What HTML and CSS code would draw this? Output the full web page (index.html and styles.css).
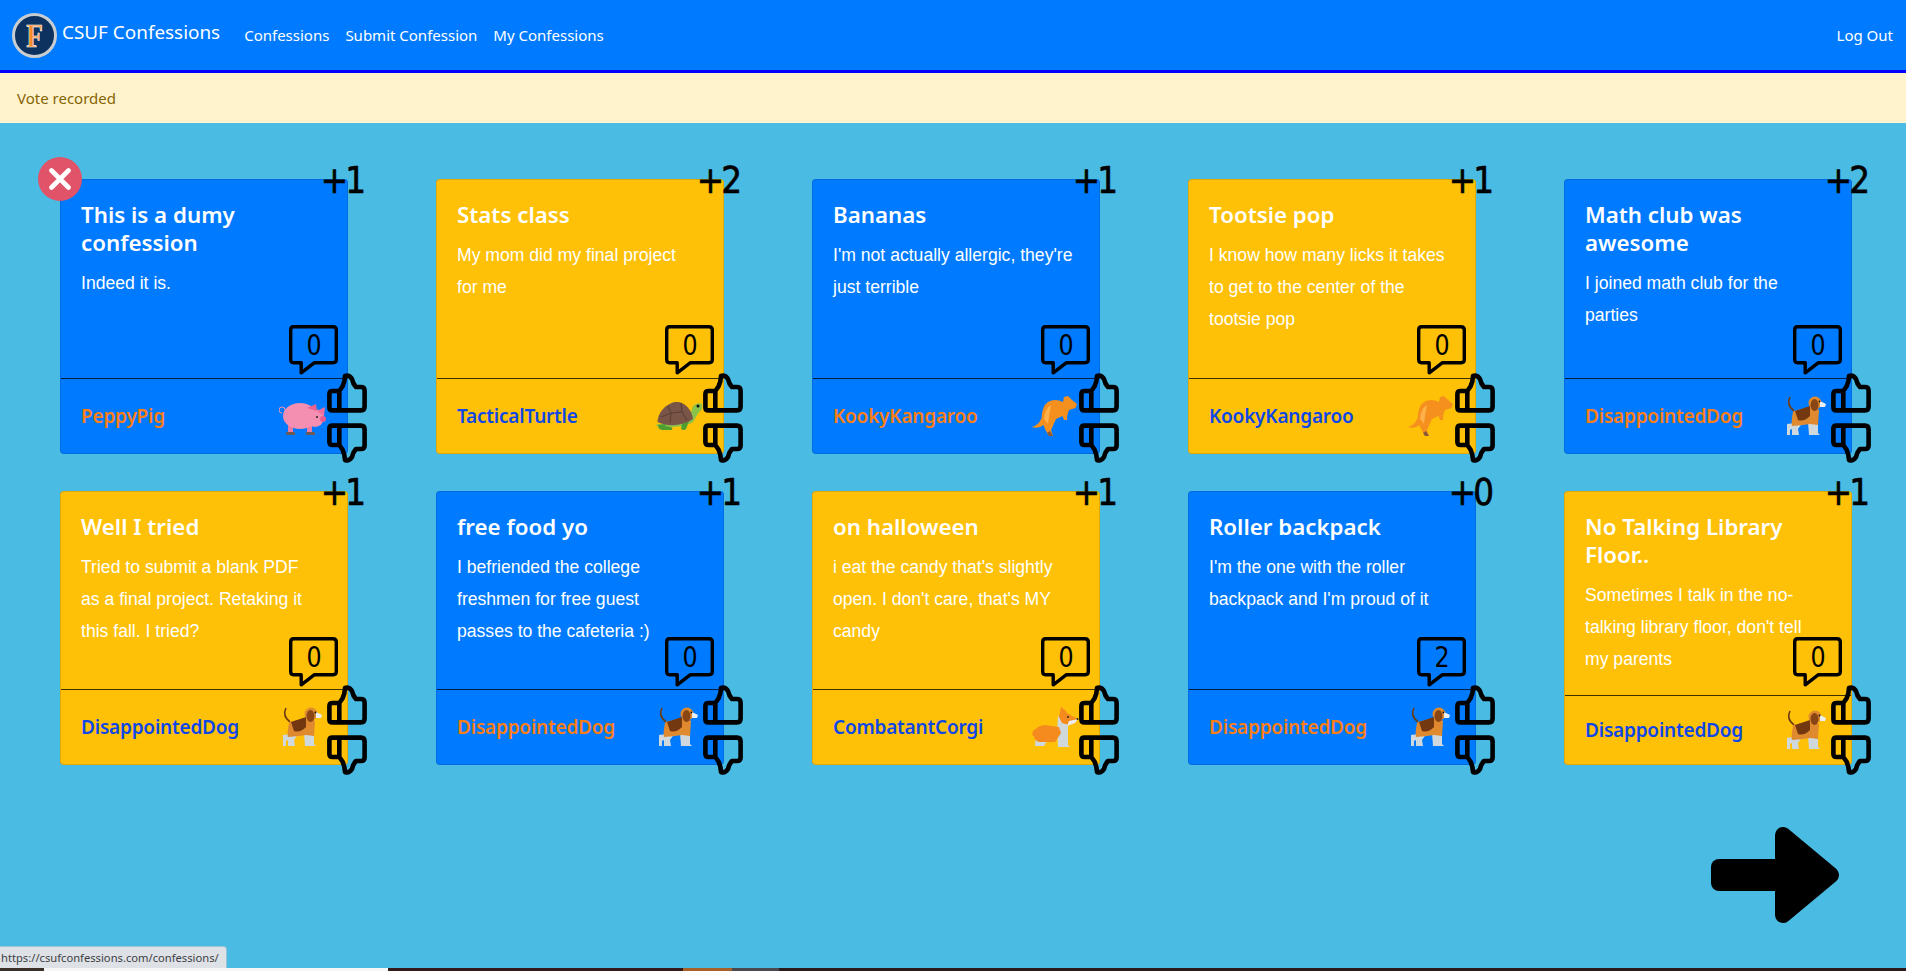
FILE: index.html
```html
<!DOCTYPE html>
<html lang="en">
<head>
<meta charset="utf-8">
<title>CSUF Confessions</title>
<link rel="stylesheet" href="styles.css">
</head>
<body>
<svg class="sprite" aria-hidden="true">
  <symbol id="i-up" viewBox="0 0 40 40"><path d="M12.3 18L15.5 13.5Q18 8 18 3Q22 1.5 25 6Q26 11 29 14H34Q37.6 14 37.6 17.5V33.5Q37.6 37.4 34 37.4H5.5Q2.4 37.4 2.4 34.4V21Q2.4 18 5.5 18H12.3V37.4"/></symbol>
  <symbol id="i-down" viewBox="0 0 40 40"><path d="M12.3 22L15.5 26.5Q18 32 18 37Q22 38.5 25 34Q26 29 29 26H34Q37.6 26 37.6 22.5V6.5Q37.6 2.6 34 2.6H5.5Q2.4 2.6 2.4 5.6V19Q2.4 22 5.5 22H12.3V2.6"/></symbol>
  <symbol id="i-bubble" viewBox="0 0 50 50"><path d="M4.5 1.8H44Q47.3 1.8 47.3 5V34.5Q47.3 37.7 44 37.7H25.5L12.2 47.8V37.7H4.5Q1.7 37.7 1.7 34.5V5Q1.7 1.8 4.5 1.8Z"/></symbol>
  <symbol id="a-pig" viewBox="0 0 48 48">
    <path d="M6 18a3 3 0 1 0-3 3" fill="none" stroke="#f48fb1" stroke-width="1"/>
    <rect x="9" y="32" width="5" height="9" fill="#ec7ca3"/><rect x="28" y="32" width="5" height="9" fill="#ec7ca3"/>
    <rect x="7" y="40" width="9" height="3" rx="1" fill="#6d5a55"/><rect x="27" y="40" width="9" height="3" rx="1" fill="#6d5a55"/>
    <ellipse cx="21" cy="24" rx="17" ry="13" fill="#f48fb1"/>
    <ellipse cx="36" cy="26" rx="9" ry="9" fill="#f48fb1"/>
    <path d="M28 16l9-4 1 7z" fill="#e8628f"/><path d="M38 19l8-4-1 9z" fill="#f06f9c"/>
    <ellipse cx="44" cy="27" rx="3" ry="3" fill="#ec5c90"/><circle cx="38" cy="25" r="1" fill="#222"/>
  </symbol>
  <symbol id="a-turtle" viewBox="0 0 48 48">
    <path d="M0 33C12 30 28 30 34 26L38 14Q42 10 47 12 48 18 44 20L38 30Q30 36 6 35Z" fill="#8bc34a"/>
    <path d="M3 33q0 5 5 5h9q1-3-2-3l-5-1 1-2zM27 31l-1 6q3 2 5 0l3-8z" fill="#4f9e2f"/>
    <path d="M2.500 30C3 18 14 10 22 10 30 10 37 18 38 27 28 34 12 35 2.500 30Z" fill="#795548"/>
    <path d="M13 14l3 7-10 4M16 21l11-1 5 8M27 20l-1-9M16 21l-1 10" stroke="#5d4037" stroke-width="1.200" fill="none"/>
    <circle cx="43" cy="14" r="1.500" fill="#111"/>
  </symbol>
  <symbol id="a-kangaroo" viewBox="0 0 48 48">
    <path d="M.7 35Q7 34 10.700 26 11 14 17 10 24 6 32 10L33 5 37 4 41 8 46 12 44.500 16 38 18Q36 22 36 28L33 28 31.500 24 25 27 20 38 22 44 18 44 14 37 12.500 33Q8 37 .7 35Z" fill="#f5901e"/>
    <path d="M13 27Q14 16 20 13 18 22 17 32Z" fill="#ffb04a"/><path d="M19 39L22 44 18 44 16 41Z" fill="#8a5a3a"/>
  </symbol>
  <symbol id="a-dog" viewBox="0 0 48 48">
    <path d="M7 5Q3 13 11 19" fill="none" stroke="#6d3a12" stroke-width="1.600"/>
    <path d="M4 32L20 30 15 37 16 43H9V37L7 38V43H4ZM25 30H35V41L37 43H26Z" fill="#cfd8dc"/>
    <path d="M10 20Q8 30 9 34L20 33 27 32 35 33 36 18 30 14 11 19Z" fill="#e08a30"/>
    <path d="M12 19L27 14V24Q21 30 15 28Z" fill="#73380f"/>
    <circle cx="32" cy="11" r="6.500" fill="#e08a30"/>
    <ellipse cx="31.500" cy="13" rx="4" ry="6" fill="#8a4515"/>
    <path d="M37 9L43 12 42 15 37 15Z" fill="#eceff1"/><circle cx="36.500" cy="9.500" r=".9" fill="#111"/>
  </symbol>
  <symbol id="a-corgi" viewBox="0 0 48 48">
    <path d="M5 33L17 36 13 43H4Z" fill="#cfd8dc"/>
    <path d="M26 26H37V42L39 44H27ZM27 13L37 20V30H26Z" fill="#cfd8dc"/>
    <path d="M1 32L2 28Q8 22 14 22L28 24 30 30 24 39H8Q3 37 3 33Z" fill="#f58a1f"/>
    <path d="M30 4L34 7 36 10 41 13 47 16 44 20 38 22 31 20 28 14Z" fill="#f58a1f"/>
    <path d="M38 18L47 16 44 20 36 23Z" fill="#eceff1"/>
    <circle cx="37" cy="14" r=".9" fill="#222"/><circle cx="46.500" cy="16" r="1" fill="#222"/>
  </symbol>
</svg>

<nav class="navbar">
  <a class="brand" href="#">
    <svg class="logo" viewBox="0 0 45 45"><circle cx="22.500" cy="22.500" r="21" fill="#0d325f" stroke="#c9cdd0" stroke-width="3"/><text transform="translate(22.500 34) scale(.8 1)" text-anchor="middle" class="logo-f">F</text></svg>
    <span>CSUF Confessions</span>
  </a>
  <a class="nav-link" href="#">Confessions</a>
  <a class="nav-link" href="#">Submit Confession</a>
  <a class="nav-link" href="#">My Confessions</a>
  <a class="nav-link logout" href="#">Log Out</a>
</nav>
<div class="alert">Vote recorded</div>

<main class="board">
  <section class="grid">

    <article class="card blue">
      <button class="delete" aria-label="Delete"><svg viewBox="0 0 22 22"><path d="M2.500 2.500L19.500 19.500M19.500 2.500L2.500 19.500"/></svg></button>
      <span class="score">+1</span>
      <div class="card-body"><h4>This is a dumy confession</h4><p>Indeed it is.</p></div>
      <div class="bubble"><svg><use href="#i-bubble"/></svg><span>0</span></div>
      <div class="card-footer"><span class="name">PeppyPig</span><svg class="avatar"><use href="#a-pig"/></svg></div>
      <svg class="thumb up"><use href="#i-up"/></svg><svg class="thumb down"><use href="#i-down"/></svg>
    </article>

    <article class="card yellow">
      <span class="score">+2</span>
      <div class="card-body"><h4>Stats class</h4><p>My mom did my final project<br>for me</p></div>
      <div class="bubble"><svg><use href="#i-bubble"/></svg><span>0</span></div>
      <div class="card-footer"><span class="name">TacticalTurtle</span><svg class="avatar"><use href="#a-turtle"/></svg></div>
      <svg class="thumb up"><use href="#i-up"/></svg><svg class="thumb down"><use href="#i-down"/></svg>
    </article>

    <article class="card blue">
      <span class="score">+1</span>
      <div class="card-body"><h4>Bananas</h4><p>I'm not actually allergic, they're just terrible</p></div>
      <div class="bubble"><svg><use href="#i-bubble"/></svg><span>0</span></div>
      <div class="card-footer"><span class="name">KookyKangaroo</span><svg class="avatar"><use href="#a-kangaroo"/></svg></div>
      <svg class="thumb up"><use href="#i-up"/></svg><svg class="thumb down"><use href="#i-down"/></svg>
    </article>

    <article class="card yellow">
      <span class="score">+1</span>
      <div class="card-body"><h4>Tootsie pop</h4><p>I know how many licks it takes to get to the center of the tootsie pop</p></div>
      <div class="bubble"><svg><use href="#i-bubble"/></svg><span>0</span></div>
      <div class="card-footer"><span class="name">KookyKangaroo</span><svg class="avatar"><use href="#a-kangaroo"/></svg></div>
      <svg class="thumb up"><use href="#i-up"/></svg><svg class="thumb down"><use href="#i-down"/></svg>
    </article>

    <article class="card blue">
      <span class="score">+2</span>
      <div class="card-body"><h4>Math club was awesome</h4><p>I joined math club for the parties</p></div>
      <div class="bubble"><svg><use href="#i-bubble"/></svg><span>0</span></div>
      <div class="card-footer"><span class="name">DisappointedDog</span><svg class="avatar"><use href="#a-dog"/></svg></div>
      <svg class="thumb up"><use href="#i-up"/></svg><svg class="thumb down"><use href="#i-down"/></svg>
    </article>

    <article class="card yellow">
      <span class="score">+1</span>
      <div class="card-body"><h4>Well I tried</h4><p>Tried to submit a blank PDF<br>as a final project. Retaking it<br>this fall. I tried?</p></div>
      <div class="bubble"><svg><use href="#i-bubble"/></svg><span>0</span></div>
      <div class="card-footer"><span class="name">DisappointedDog</span><svg class="avatar"><use href="#a-dog"/></svg></div>
      <svg class="thumb up"><use href="#i-up"/></svg><svg class="thumb down"><use href="#i-down"/></svg>
    </article>

    <article class="card blue">
      <span class="score">+1</span>
      <div class="card-body"><h4>free food yo</h4><p>I befriended the college<br>freshmen for free guest<br>passes to the cafeteria :)</p></div>
      <div class="bubble"><svg><use href="#i-bubble"/></svg><span>0</span></div>
      <div class="card-footer"><span class="name">DisappointedDog</span><svg class="avatar"><use href="#a-dog"/></svg></div>
      <svg class="thumb up"><use href="#i-up"/></svg><svg class="thumb down"><use href="#i-down"/></svg>
    </article>

    <article class="card yellow">
      <span class="score">+1</span>
      <div class="card-body"><h4>on halloween</h4><p>i eat the candy that's slightly open. I don't care, that's MY candy</p></div>
      <div class="bubble"><svg><use href="#i-bubble"/></svg><span>0</span></div>
      <div class="card-footer"><span class="name">CombatantCorgi</span><svg class="avatar"><use href="#a-corgi"/></svg></div>
      <svg class="thumb up"><use href="#i-up"/></svg><svg class="thumb down"><use href="#i-down"/></svg>
    </article>

    <article class="card blue">
      <span class="score">+0</span>
      <div class="card-body"><h4>Roller backpack</h4><p>I'm the one with the roller backpack and I'm proud of it</p></div>
      <div class="bubble"><svg><use href="#i-bubble"/></svg><span>2</span></div>
      <div class="card-footer"><span class="name">DisappointedDog</span><svg class="avatar"><use href="#a-dog"/></svg></div>
      <svg class="thumb up"><use href="#i-up"/></svg><svg class="thumb down"><use href="#i-down"/></svg>
    </article>

    <article class="card yellow tall">
      <span class="score">+1</span>
      <div class="card-body"><h4>No Talking Library Floor..</h4><p>Sometimes I talk in the no-<br>talking library floor, don't tell<br>my parents</p></div>
      <div class="bubble"><svg><use href="#i-bubble"/></svg><span>0</span></div>
      <div class="card-footer"><span class="name">DisappointedDog</span><svg class="avatar"><use href="#a-dog"/></svg></div>
      <svg class="thumb up"><use href="#i-up"/></svg><svg class="thumb down"><use href="#i-down"/></svg>
    </article>

  </section>
  <a class="next" href="#" aria-label="Next page">
    <svg viewBox="0 0 128 96"><rect x="0" y="32" width="80" height="32" rx="8"/><path class="next-head" d="M72 8V88L120 48Z"/></svg>
  </a>
</main>

<div class="status">https://csufconfessions.com/confessions/</div>
<div class="strip"><i class="s1"></i><i class="s2"></i><i class="s3"></i><i class="s4"></i><i class="s5"></i><i class="s6"></i></div>
</body>
</html>
```

FILE: styles.css
```css
* { box-sizing: border-box; }
html, body { height: 100%; }
body {
  margin: 0;
  height: 971px;
  overflow: hidden;
  display: flex;
  flex-direction: column;
  background: #4abce3;
  font-family: "Noto Sans", sans-serif;
  font-size: 15px;
  color: #212529;
  position: relative;
}
.sprite { position: absolute; width: 0; height: 0; overflow: hidden; }
a { text-decoration: none; color: inherit; }

.navbar {
  height: 73px;
  flex: none;
  display: flex;
  align-items: center;
  background: #007bff;
  border-bottom: 3px solid #0000ff;
  padding: 0 12px;
  color: #fff;
}
.brand { display: flex; align-items: center; gap: 5px; font-size: 18.9px; margin-right: 24px; position: relative; top: -3px; }
.logo { width: 45px; height: 45px; flex: none; position: relative; top: 3px; }
.logo-f { font-family: "Liberation Serif", serif; font-weight: 700; font-size: 34px; fill: #f68b2c; stroke: #fff; stroke-width: .7px; }
.nav-link { margin-right: 16px; }
.logout { margin-left: auto; margin-right: 1px; }

.alert {
  height: 50px;
  flex: none;
  display: flex;
  align-items: center;
  padding: 0 17px;
  background: #fff3cd;
  color: #856404;
}

.board { flex: 1; display: flex; flex-direction: column; padding: 56px 0 0 60px; }
.grid {
  display: grid;
  grid-template-columns: repeat(5, 288px);
  grid-auto-rows: 274.5px;
  column-gap: 88px;
  row-gap: 37px;
}

.card {
  position: relative;
  display: flex;
  flex-direction: column;
  border-radius: 4px;
  border: 1px solid rgba(0, 0, 0, .125);
  color: #fff;
}
.card.blue { background: #007bff; }
.card.yellow { background: #ffc107; }
.card-body { flex: 1; padding: 21px 20px 0; }
.card h4 { margin: 0 0 10px; font-size: 22.3px; line-height: 28.2px; font-weight: 600; }
.card p { margin: 0; max-width: 246px; font-family: "Liberation Sans", Arial, sans-serif; font-size: 17.6px; line-height: 32px; }
.card-footer {
  flex: none;
  height: 75px;
  display: flex;
  align-items: center;
  justify-content: space-between;
  padding: 0 20px;
  border-top: 1px solid rgba(0, 0, 0, .75);
}
.tall .card-footer { height: 69px; }
.name { font-size: 19px; font-weight: 600; letter-spacing: -.2px; }
.blue .name { color: #fd7e14; }
.yellow .name { color: #0d47e8; }
.avatar { width: 48px; height: 48px; flex: none; }

.score {
  position: absolute;
  top: -25px;
  right: -16px;
  font-family: "DejaVu Sans", sans-serif;
  font-size: 38px;
  line-height: 50px;
  color: #000;
  -webkit-text-stroke: .7px #000;
  letter-spacing: -3.5px;
  transform: scaleX(.86);
  transform-origin: right center;
}
.bubble { position: absolute; top: 145px; right: 8px; width: 50px; height: 50px; }
.bubble svg { width: 50px; height: 50px; display: block; fill: none; stroke: #000; stroke-width: 3.4; stroke-linejoin: round; stroke-linecap: round; }
.bubble span {
  position: absolute;
  left: 0;
  right: 0;
  top: 6px;
  text-align: center;
  font-family: "DejaVu Sans", sans-serif;
  font-size: 28px;
  line-height: 30px;
  color: #000;
  transform: scaleX(.85);
}
.thumb { position: absolute; right: -20px; width: 40px; height: 40px; fill: none; stroke: #000; stroke-width: 4.6; stroke-linejoin: round; stroke-linecap: round; }
.thumb.up { top: 193px; }
.thumb.down { top: 243px; }

.delete {
  position: absolute;
  top: -23px;
  left: -23px;
  width: 44px;
  height: 44px;
  padding: 0;
  display: flex;
  align-items: center;
  justify-content: center;
  border: 0;
  border-radius: 50%;
  background: #e15368;
}
.delete svg { width: 22px; height: 22px; fill: none; stroke: #fff; stroke-width: 4.6; stroke-linecap: round; }

.next { align-self: flex-end; width: 128px; height: 96px; margin: 62px 67px 0 0; }
.next svg { display: block; width: 128px; height: 96px; fill: #000; }
.next-head { stroke: #000; stroke-width: 16; stroke-linejoin: round; }

.status {
  position: absolute;
  left: 0;
  bottom: 3px;
  width: 227px;
  height: 22px;
  padding-left: 1px;
  background: #dee1e6;
  border: 1px solid #9fc3d6;
  border-left: 0;
  border-bottom: 0;
  border-top-right-radius: 4px;
  font-size: 11.2px;
  line-height: 21px;
  color: #3c4043;
  white-space: nowrap;
}
.strip { position: absolute; left: 0; right: 0; bottom: 0; height: 3px; display: flex; background: #2a1c1c; }
.strip i { display: block; height: 3px; }
.s1 { width: 44px; background: #3a302a; }
.s2 { width: 344px; background: #f6f6f6; }
.s3 { width: 295px; background: #33191a; }
.s4 { width: 49px; background: #a8602a; }
.s5 { width: 47px; background: #4a4a4e; }
```
